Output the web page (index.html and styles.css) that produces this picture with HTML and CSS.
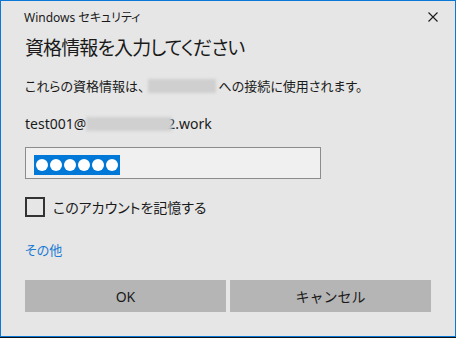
FILE: index.html
```html
<!DOCTYPE html>
<html lang="ja">
<head>
    <meta charset="UTF-8">
    <title>Windows セキュリティ</title>
    <link rel="stylesheet" href="styles.css">
</head>
<body>
    <div class="window">
        <div class="titlebar">
            <span class="title">Windows セキュリティ</span>
            <svg class="close" width="10" height="10" viewBox="0 0 10 10">
                <path d="M0.5 0.5 L9.5 9.5 M9.5 0.5 L0.5 9.5" stroke="#1a1a1a" stroke-width="1.1" fill="none"/>
            </svg>
        </div>
        <div class="content">
            <h1>資格情報を入力してください</h1>
            <p class="desc">これらの資格情報は、<span class="blur blur-host"></span>への接続に使用されます。</p>
            <p class="user">test001@<span class="blur blur-user"></span>2.work</p>
            <div class="password">
                <span class="selection">
                    <i></i><i></i><i></i><i></i><i></i><i></i>
                </span>
            </div>
            <label class="remember">
                <span class="checkbox"></span>
                <span>このアカウントを記憶する</span>
            </label>
            <a class="more">その他</a>
            <div class="buttons">
                <button type="button">OK</button>
                <button type="button">キャンセル</button>
            </div>
        </div>
    </div>
</body>
</html>
```

FILE: styles.css
```css
body {
    margin: 0;
    width: 456px;
    height: 338px;
    overflow: hidden;
    background-color: #111;
    font-family: 'Noto Sans', 'Noto Sans CJK JP', sans-serif;
    color: #1a1a1a;
}
.window {
    width: 456px;
    height: 337px;
    box-sizing: border-box;
    border: 1px solid #0a78d7;
    background-color: #e6e6e6;
    font-feature-settings: "palt";
}
.titlebar {
    display: flex;
    align-items: center;
    justify-content: space-between;
    height: 32px;
    padding: 0 17px 0 23px;
}
.title {
    font-size: 12px;
    color: #1a1a1a;
}
.content {
    padding: 0 24px;
}
h1 {
    font-size: 19px;
    font-weight: normal;
    line-height: 28px;
    letter-spacing: -0.9px;
    margin: 1px 0 0 0;
}
.desc {
    font-size: 13px;
    line-height: 18px;
    margin: 15px 0 0 0;
}
.blur {
    display: inline-block;
    height: 14px;
    vertical-align: -2px;
    background-color: #cfcfcf;
    filter: blur(1.5px);
}
.blur-host {
    width: 68px;
    margin: 0 3px;
}
.blur-user {
    position: relative;
    width: 86px;
    margin-right: -5px;
    background-color: #d0d0d0;
}
.user {
    font-size: 14px;
    line-height: 18px;
    margin: 20px 0 0 0;
}
.password {
    width: 296px;
    height: 32px;
    box-sizing: border-box;
    margin-top: 14px;
    border: 1px solid #8c8c8c;
    background-color: #f0f0f0;
    padding: 6px 0 0 8px;
}
.selection {
    display: inline-flex;
    align-items: center;
    gap: 2px;
    height: 20px;
    padding: 0 2px;
    background-color: #0078d7;
}
.selection i {
    width: 12px;
    height: 12px;
    border-radius: 50%;
    background-color: #fff;
}
.remember {
    display: flex;
    align-items: center;
    gap: 8px;
    margin-top: 18px;
    font-size: 14px;
}
.checkbox {
    width: 20px;
    height: 20px;
    box-sizing: border-box;
    border: 2px solid #333;
}
.more {
    display: block;
    margin-top: 24px;
    font-size: 13px;
    line-height: 18px;
    color: #1a7ad4;
}
.buttons {
    display: flex;
    gap: 4px;
    margin-top: 21px;
}
.buttons button {
    width: 202px;
    height: 32px;
    border: none;
    background-color: #b5b5b5;
    color: #1a1a1a;
    font-family: inherit;
    font-size: 14px;
    padding: 0;
}
```
